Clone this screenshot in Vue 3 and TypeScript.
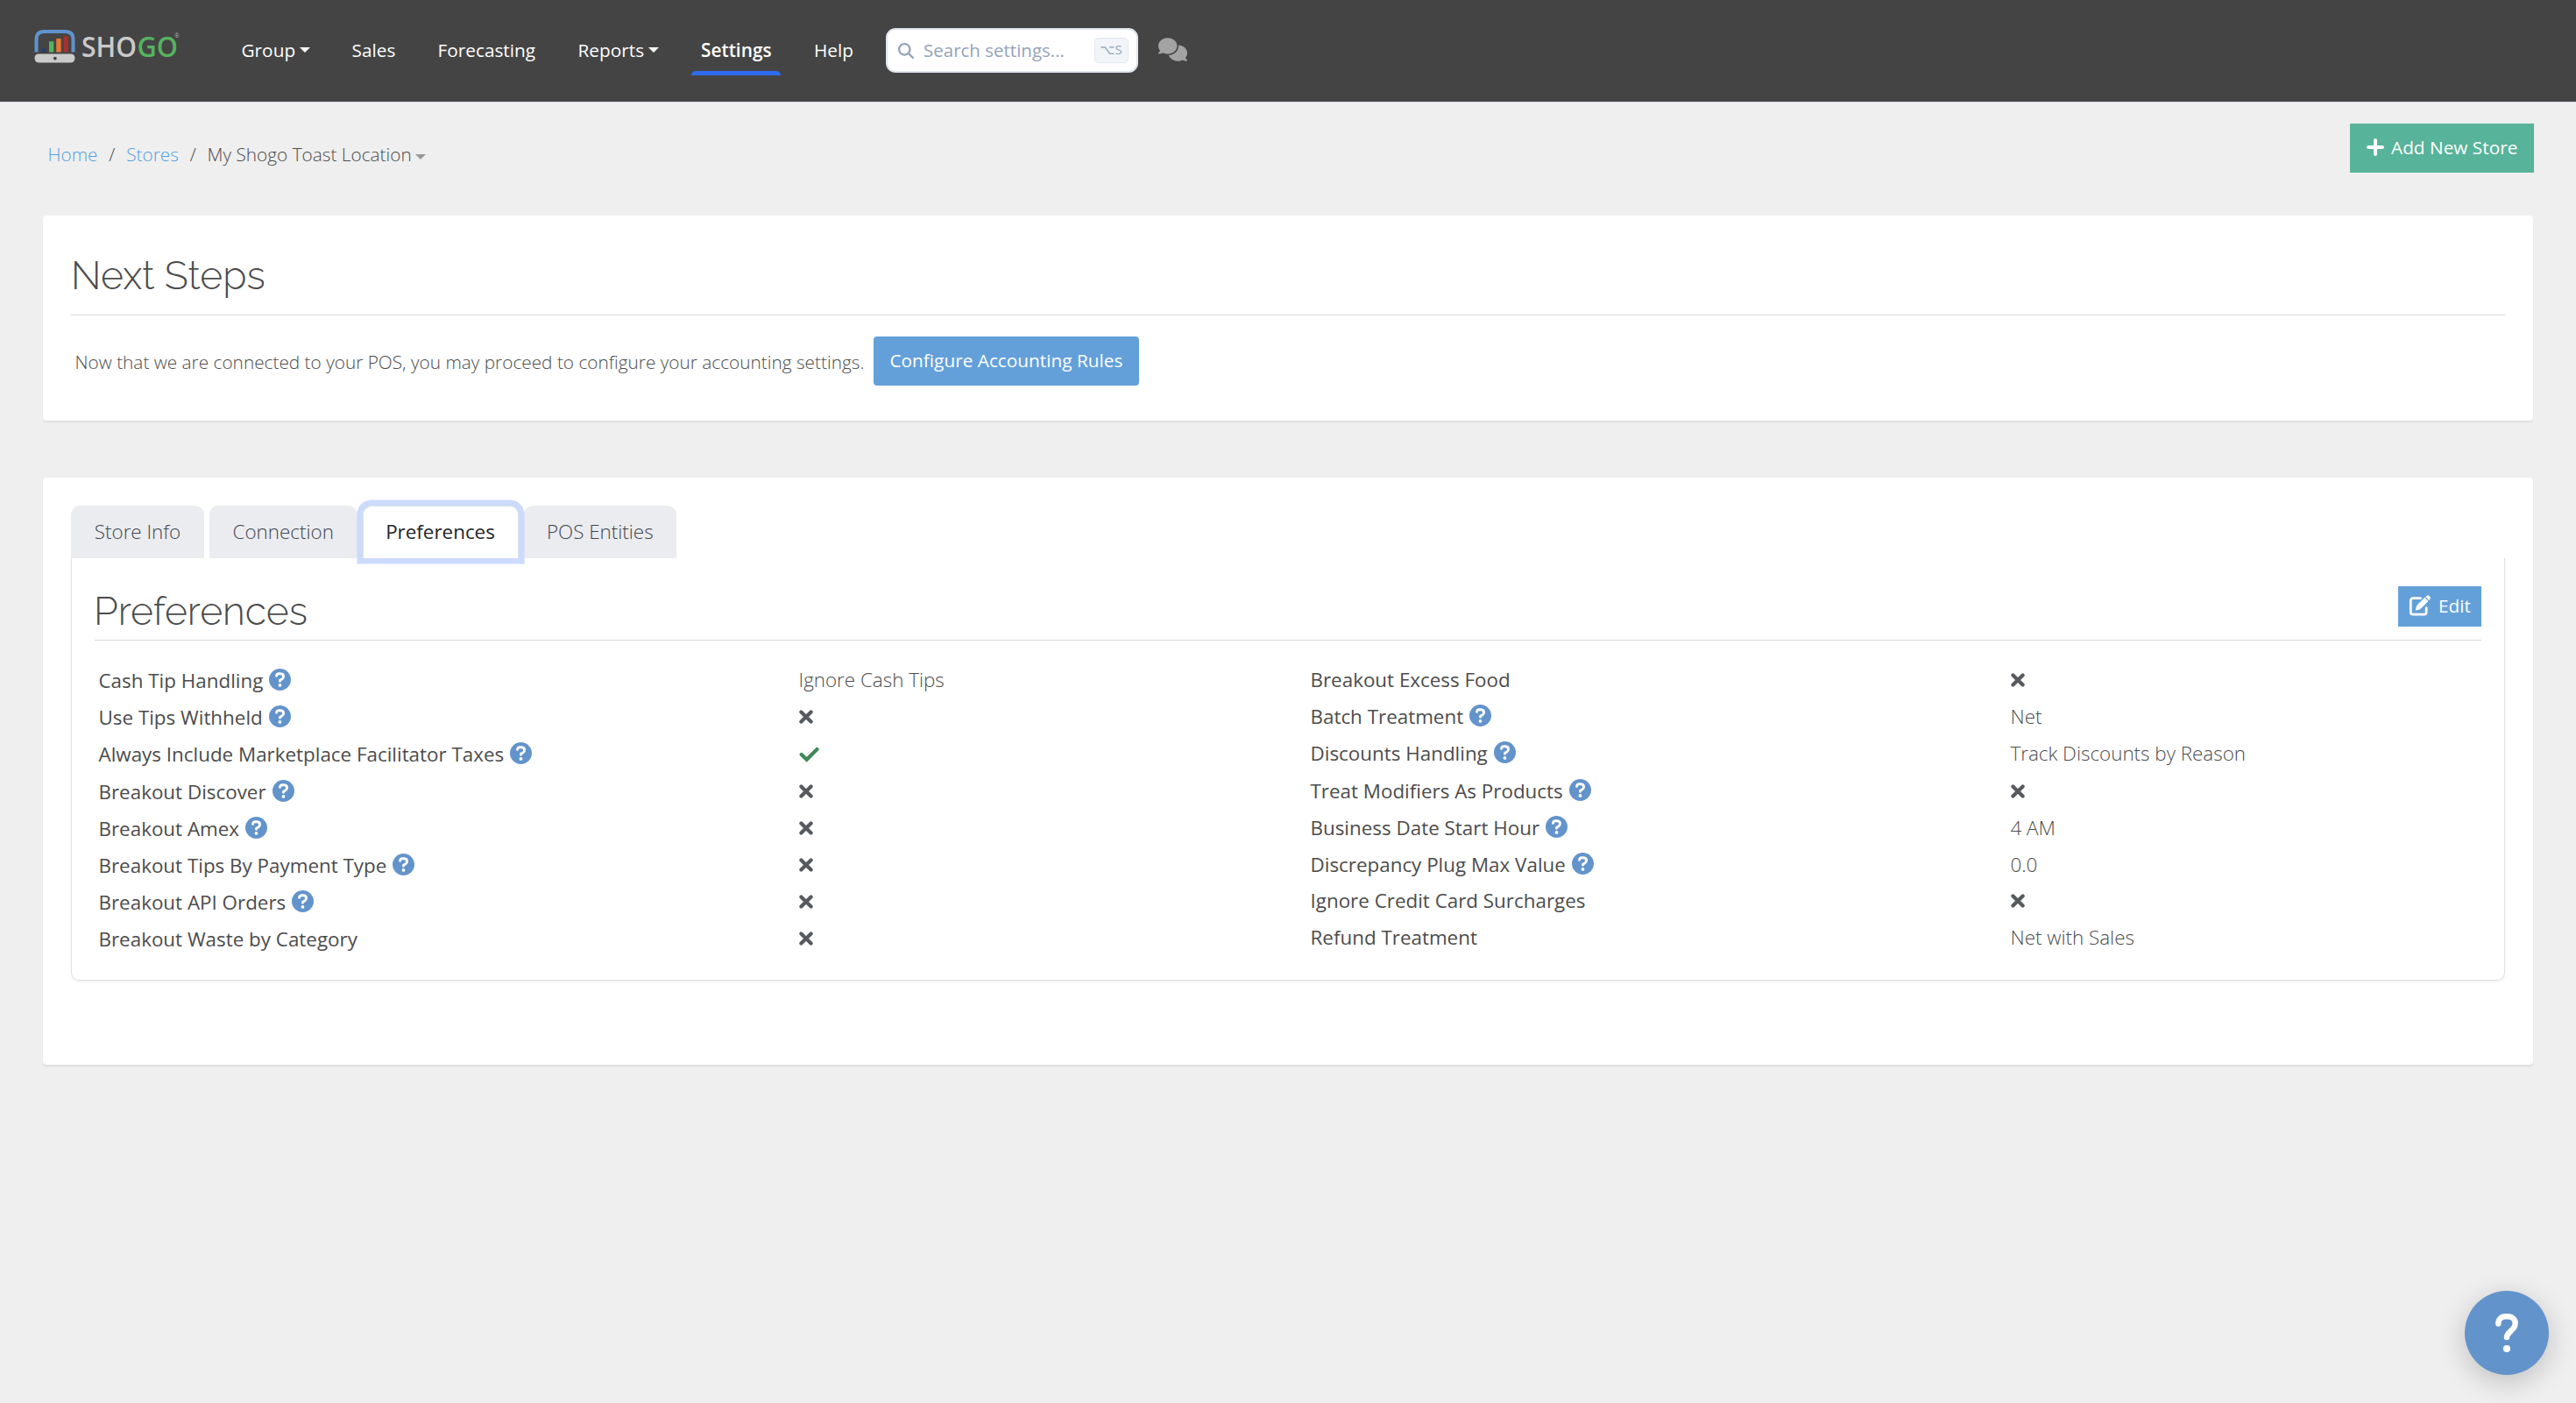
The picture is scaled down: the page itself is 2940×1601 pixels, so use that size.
<script setup lang="ts">
interface NavItem {
  label: string
  caret?: boolean
  active?: boolean
}

interface Preference {
  label: string
  help?: boolean
  value: string | boolean
}

const navItems: NavItem[] = [
  { label: 'Group', caret: true },
  { label: 'Sales' },
  { label: 'Forecasting' },
  { label: 'Reports', caret: true },
  { label: 'Settings', active: true },
  { label: 'Help' },
]

const tabs: string[] = ['Store Info', 'Connection', 'Preferences', 'POS Entities']
const activeTab = 'Preferences'

const leftPrefs: Preference[] = [
  { label: 'Cash Tip Handling', help: true, value: 'Ignore Cash Tips' },
  { label: 'Use Tips Withheld', help: true, value: false },
  { label: 'Always Include Marketplace Facilitator Taxes', help: true, value: true },
  { label: 'Breakout Discover', help: true, value: false },
  { label: 'Breakout Amex', help: true, value: false },
  { label: 'Breakout Tips By Payment Type', help: true, value: false },
  { label: 'Breakout API Orders', help: true, value: false },
  { label: 'Breakout Waste by Category', value: false },
]

const rightPrefs: Preference[] = [
  { label: 'Breakout Excess Food', value: false },
  { label: 'Batch Treatment', help: true, value: 'Net' },
  { label: 'Discounts Handling', help: true, value: 'Track Discounts by Reason' },
  { label: 'Treat Modifiers As Products', help: true, value: false },
  { label: 'Business Date Start Hour', help: true, value: '4 AM' },
  { label: 'Discrepancy Plug Max Value', help: true, value: '0.0' },
  { label: 'Ignore Credit Card Surcharges', value: false },
  { label: 'Refund Treatment', value: 'Net with Sales' },
]

const columns: { side: string; items: Preference[] }[] = [
  { side: 'left', items: leftPrefs },
  { side: 'right', items: rightPrefs },
]
</script>

<template>
  <div class="page">
    <header class="topbar">
      <svg class="logo" width="170" height="44" viewBox="0 0 170 44">
        <path d="M2.500 29.500V15q0-9 9-9H35.500q9 0 9 9V29.500" fill="none" stroke="#5f93cf" stroke-width="4" />
        <rect x="8.800" y="25" width="5.200" height="4.500" fill="#2e3a66" />
        <rect x="17" y="17.300" width="5.300" height="12.200" fill="#56b35f" />
        <rect x="25.200" y="14" width="5.500" height="15.500" fill="#e5763a" />
        <rect x="33.600" y="11.300" width="5.300" height="18.200" fill="#a8302f" />
        <path d="M4 31.500H43q3.500 1 3.500 4.500 0 5.500-5.500 5.500H6q-5.500 0-5.500-5.500 0-3.500 3.500-4.500z" fill="#cbcbcb" />
        <circle cx="23.800" cy="36.600" r="1.900" fill="#444" />
        <text x="54" y="35" textLength="63" lengthAdjust="spacingAndGlyphs" class="wordmark" fill="#cbcbcb">SHO</text>
        <text x="117.500" y="35" textLength="46.500" lengthAdjust="spacingAndGlyphs" class="wordmark" fill="#56b35f">GO</text>
        <text x="160" y="13" class="reg" fill="#cbcbcb">®</text>
      </svg>

      <nav class="nav">
        <a v-for="item in navItems" :key="item.label" class="nav-item" :class="{ active: item.active }">
          <span class="nav-text">{{ item.label }}</span><i v-if="item.caret" class="caret"></i>
        </a>
      </nav>

      <div class="search">
        <svg class="search-icon" viewBox="0 0 512 512" width="18" height="18">
          <path fill="currentColor" d="M416 208c0 45.900-14.900 88.300-40 122.700L502.600 457.400c12.500 12.500 12.500 32.800 0 45.300s-32.800 12.500-45.300 0L330.700 376c-34.400 25.200-76.800 40-122.700 40C93.100 416 0 322.900 0 208S93.100 0 208 0S416 93.100 416 208zM208 352a144 144 0 1 0 0-288 144 144 0 1 0 0 288z" />
        </svg>
        <span class="placeholder">Search settings...</span>
        <kbd class="key">⌥S</kbd>
      </div>

      <svg class="chat" viewBox="0 0 640 512" width="33" height="27">
        <path fill="#a3a3a3" d="M208 352c114.900 0 208-78.800 208-176S322.900 0 208 0S0 78.800 0 176c0 38.600 14.700 74.300 39.600 103.400c-3.500 9.400-8.700 17.700-14.200 24.700c-4.800 6.200-9.700 11-13.300 14.300c-1.800 1.600-3.300 2.900-4.300 3.700c-.5 .4-.9 .7-1.100 .8l-.2 .2C1 327.200-1.400 334.400 .8 340.900S9.100 352 16 352c21.800 0 43.800-5.600 62.100-12.500c9.200-3.500 17.800-7.400 25.200-11.400C134.100 343.300 169.800 352 208 352zM448 176c0 112.300-99.100 196.900-216.500 207C255.800 457.400 336.400 512 432 512c38.200 0 73.900-8.700 104.700-23.900c7.500 4 16 7.900 25.200 11.400c18.300 6.900 40.300 12.500 62.100 12.500c6.900 0 13.100-4.500 15.200-11.100c2.100-6.600-.2-13.800-5.800-17.900l-.2-.2c-.2-.2-.6-.4-1.100-.8c-1-.8-2.500-2-4.300-3.700c-3.600-3.300-8.500-8.100-13.300-14.300c-5.500-7-10.700-15.400-14.200-24.700c24.900-29 39.600-64.700 39.600-103.400c0-92.800-84.900-168.900-192.600-175.500c.4 5.100 .6 10.300 .6 15.500z" />
      </svg>
    </header>

    <div class="crumb-row">
      <div class="crumbs">
        <a class="home">Home</a><span class="sep">/</span><a class="stores">Stores</a><span class="sep">/</span><span class="here">My Shogo Toast Location</span><i class="caret muted"></i>
      </div>
      <button class="btn add">
        <svg class="plus" viewBox="0 0 20 20" width="20" height="20">
          <path d="M10 2V18M2 10H18" stroke="#fff" stroke-width="4" stroke-linecap="round" />
        </svg>
        <span class="add-text">Add New Store</span>
      </button>
    </div>

    <section class="card steps">
      <h2 class="title">Next Steps</h2>
      <div class="steps-row">
        <p class="steps-text">Now that we are connected to your POS, you may proceed to configure your accounting settings.</p>
        <button class="btn configure"><span class="configure-text">Configure Accounting Rules</span></button>
      </div>
    </section>

    <section class="card store">
      <div class="tabs">
        <button v-for="tab in tabs" :key="tab" class="tab" :class="{ current: tab === activeTab }">{{ tab }}</button>
      </div>
      <div class="panel">
        <div class="panel-head">
          <h2 class="title">Preferences</h2>
          <button class="btn edit">
            <svg viewBox="0 0 26 26" width="26" height="26" fill="none">
              <path d="M13.500 4.700H5Q2.300 4.700 2.300 7.400V20.500Q2.300 23.200 5 23.200H17.500Q20.200 23.200 20.200 20.500V15.500" stroke="#fff" stroke-width="2.700" stroke-linecap="round" />
              <path d="M8.300 18.300L9.700 12.900L18.300 4.300L22 8L13.400 16.600Z" fill="#fff" stroke="#fff" stroke-width="1" stroke-linejoin="round" />
              <path d="M19.300 3.300L20.700 1.900Q22 .8 23.300 1.900L24.400 3Q25.500 4.300 24.400 5.600L23 7Z" fill="#fff" />
            </svg>
            <span>Edit</span>
          </button>
        </div>
        <div class="prefs">
          <div v-for="col in columns" :key="col.side" class="pref-col" :class="col.side">
            <div v-for="pref in col.items" :key="pref.label" class="pref">
              <div class="pref-label">
                <span>{{ pref.label }}</span>
                <svg v-if="pref.help" class="help" viewBox="0 0 512 512" width="25" height="25">
                  <circle cx="256" cy="256" r="256" fill="#6393cb" />
                  <path d="M174 172Q180 118 232 118H274Q340 122 340 184Q340 222 302 244L256 270V292" fill="none" stroke="#fff" stroke-width="58" stroke-linecap="round" stroke-linejoin="round" />
                  <circle cx="256" cy="388" r="39" fill="#fff" />
                </svg>
              </div>
              <div class="pref-value">
                <svg v-if="pref.value === true" class="check" viewBox="0 0 24 18" width="24" height="18">
                  <path d="M2.700 9L8.700 14.800L20.500 3" fill="none" stroke="#41875a" stroke-width="4.200" stroke-linecap="round" />
                </svg>
                <svg v-else-if="pref.value === false" class="cross" viewBox="0 0 16 16" width="16" height="16">
                  <path d="M2.400 2.400L13.600 13.600M13.600 2.400L2.400 13.600" stroke="#565a5e" stroke-width="4.200" stroke-linecap="round" />
                </svg>
                <span v-else>{{ pref.value }}</span>
              </div>
            </div>
          </div>
        </div>
      </div>
    </section>

    <button class="fab">
      <svg viewBox="0 0 30 48" width="30" height="48">
        <path d="M5.300 13.500C5.300 8 9 5.300 14 5.300H16C21 5.300 24.700 8.500 24.700 13C24.700 17 22.500 19.200 20 21.500C17 24.200 15 26 15 29" fill="none" stroke="#fff" stroke-width="6.400" stroke-linecap="round" />
        <circle cx="15" cy="42" r="4.100" fill="#fff" />
      </svg>
    </button>
  </div>
</template>

<style>
body {
  background: #efefef;
}
</style>

<style scoped>
* {
  box-sizing: border-box;
}
.page {
  min-height: 1601px;
  background: #efefef;
  font-family: "Open Sans", "Noto Sans", "DejaVu Sans", sans-serif;
  font-size: 20.8px;
  font-weight: 300;
  color: #4c4c4c;
  overflow: hidden;
}
h2, p {
  margin: 0;
}
button {
  font: inherit;
  border: 0;
  padding: 0;
}
.topbar {
  display: flex;
  align-items: flex-start;
  height: 117px;
  padding-left: 39px;
  background: #444;
  border-bottom: 1px solid #dbe0e6;
}
.logo {
  margin-top: 30px;
  flex: none;
}
.wordmark {
  font-family: "Open Sans", sans-serif;
  font-size: 32px;
  font-weight: 600;
}
.reg {
  font-size: 7px;
}
.nav {
  display: grid;
  grid-template-columns: 126px 98px 160px 140.500px 129px 81.500px;
  margin: 28px 0 0 66.500px;
}
.nav-item {
  position: relative;
  height: 58px;
  line-height: 58px;
  font-weight: 500;
  color: #fff;
  white-space: nowrap;
}
.nav-item.active {
  font-weight: 600;
}
.nav-item.active::after {
  content: "";
  position: absolute;
  left: -11px;
  bottom: 0;
  width: 102px;
  height: 5px;
  border-radius: 5px 5px 0 0;
  background: #2f6bee;
}
.caret {
  display: inline-block;
  margin-left: 5px;
  vertical-align: 5px;
  border: 6px solid transparent;
  border-top-color: currentColor;
  border-bottom: 0;
}
.caret.muted {
  margin-left: 4.500px;
  color: #999;
  vertical-align: 2px;
}
.search {
  display: flex;
  align-items: center;
  width: 288px;
  height: 51px;
  margin-top: 32px;
  padding: 0 9px 0 12px;
  border: 2px solid #e0e5ec;
  border-radius: 11px;
  background: #fff;
  color: #94a3b8;
}
.placeholder {
  flex: 1;
  margin: 0 0 2px 11.500px;
  font-size: 20.500px;
  font-weight: 400;
  white-space: nowrap;
}
.key {
  width: 39px;
  height: 29px;
  border: 1px solid #e2e8f0;
  border-radius: 5px;
  background: #f1f5f9;
  font-family: "Open Sans", "DejaVu Sans", sans-serif;
  font-size: 15px;
  font-weight: 400;
  line-height: 25px;
  text-align: center;
}
.chat {
  margin: 43px 0 0 23.500px;
}
.crumb-row {
  display: flex;
  justify-content: space-between;
  height: 129px;
  padding: 24px 48px 0 54.500px;
}
.crumbs {
  height: 56px;
  padding-top: 7px;
  line-height: 56px;
  white-space: nowrap;
}
.crumbs a {
  color: #549fe0;
}
.sep {
  margin: 0 12.800px;
}
.btn {
  display: flex;
  align-items: center;
  height: 56px;
  color: #fff;
  font-weight: 500;
  white-space: nowrap;
}
.add {
  width: 210px;
  padding: 0 0 2px 19px;
  background: #57b399;
}
.add-text {
  margin-left: 8px;
}
.card {
  width: 2842px;
  margin-left: 49px;
  border-radius: 4px;
  background: #fff;
  box-shadow: 0 2px 2px rgba(0, 0, 0, 0.07);
}
.steps {
  height: 234px;
  padding: 0 32px;
}
.title {
  margin-left: -1px;
  font-family: "Raleway", "Lato", sans-serif;
  font-size: 44.500px;
  font-weight: 300;
}
.steps .title {
  height: 114px;
  margin-left: 0;
  line-height: 137px;
  border-bottom: 1px solid #dcdcdc;
}
.steps-row {
  display: flex;
  padding: 24px 0 0 4.500px;
}
.steps-text {
  width: 911.500px;
  line-height: 58px;
  white-space: nowrap;
}
.configure {
  width: 303px;
  padding: 0 0 2px 18.500px;
  border-radius: 4px;
  background: #63a0da;
}
.store {
  height: 670px;
  margin-top: 65px;
  padding: 32px 32px 0;
}
.tabs {
  display: flex;
  gap: 6px;
}
.tab {
  width: 152px;
  height: 60px;
  padding-bottom: 1px;
  border-radius: 10px 10px 0 0;
  background: #ebecf0;
  color: #40464c;
  font-size: 22.400px;
  font-weight: 300;
  white-space: nowrap;
}
.tab:nth-child(2) {
  width: 168.500px;
}
.tab:nth-child(3) {
  width: 178px;
}
.tab:nth-child(4) {
  width: 174.500px;
}
.tab.current {
  position: relative;
  z-index: 1;
  border: 1px solid #dee2e6;
  border-bottom: 0;
  padding-bottom: 2px;
  background: #fff;
  color: #212529;
  font-weight: 500;
  box-shadow: 0 0 0 6.500px #ccdafc;
}
.panel {
  height: 482px;
  padding: 0 26px;
  border: 1px solid #dee2e6;
  border-top: 0;
  border-radius: 0 0 9px 9px;
  box-shadow: 0 2px 2px rgba(0, 0, 0, 0.05);
}
.panel-head {
  display: flex;
  justify-content: space-between;
  height: 94px;
  border-bottom: 1px solid #d8d8d8;
}
.panel-head .title {
  line-height: 120px;
}
.edit {
  width: 95px;
  height: 46px;
  margin-top: 32px;
  padding: 0 0 3px 12px;
  background: #63a0da;
}
.edit span {
  margin: 1px 0 0 8px;
}
.prefs {
  display: flex;
  padding: 24px 0 0 4.500px;
  font-size: 22.400px;
}
.pref-col {
  flex: none;
  width: 1383px;
}
.pref-col.right {
  width: 1330px;
}
.pref {
  display: flex;
  height: 42.200px;
  line-height: 42px;
  white-space: nowrap;
}
.right .pref {
  height: 42px;
}
.right .pref:nth-child(3) {
  height: 43px;
}
.right .pref:nth-child(6) {
  height: 41px;
}
.left .pref-label {
  padding-top: 1px;
}
.pref-label {
  display: flex;
  flex: none;
  width: 799px;
  font-weight: 400;
}
.help {
  margin: 7px 0 0 7px;
}
.cross {
  display: block;
  margin-top: 12.500px;
}
.left .cross, .left .check {
  margin-top: 13px;
}
.check {
  display: block;
}
.fab {
  position: fixed;
  left: 2813px;
  top: 1473px;
  display: flex;
  align-items: center;
  justify-content: center;
  width: 96px;
  height: 96px;
  border-radius: 50%;
  background: #6393cb;
  box-shadow: 0 8px 32px rgba(0, 0, 0, 0.2);
}
</style>
